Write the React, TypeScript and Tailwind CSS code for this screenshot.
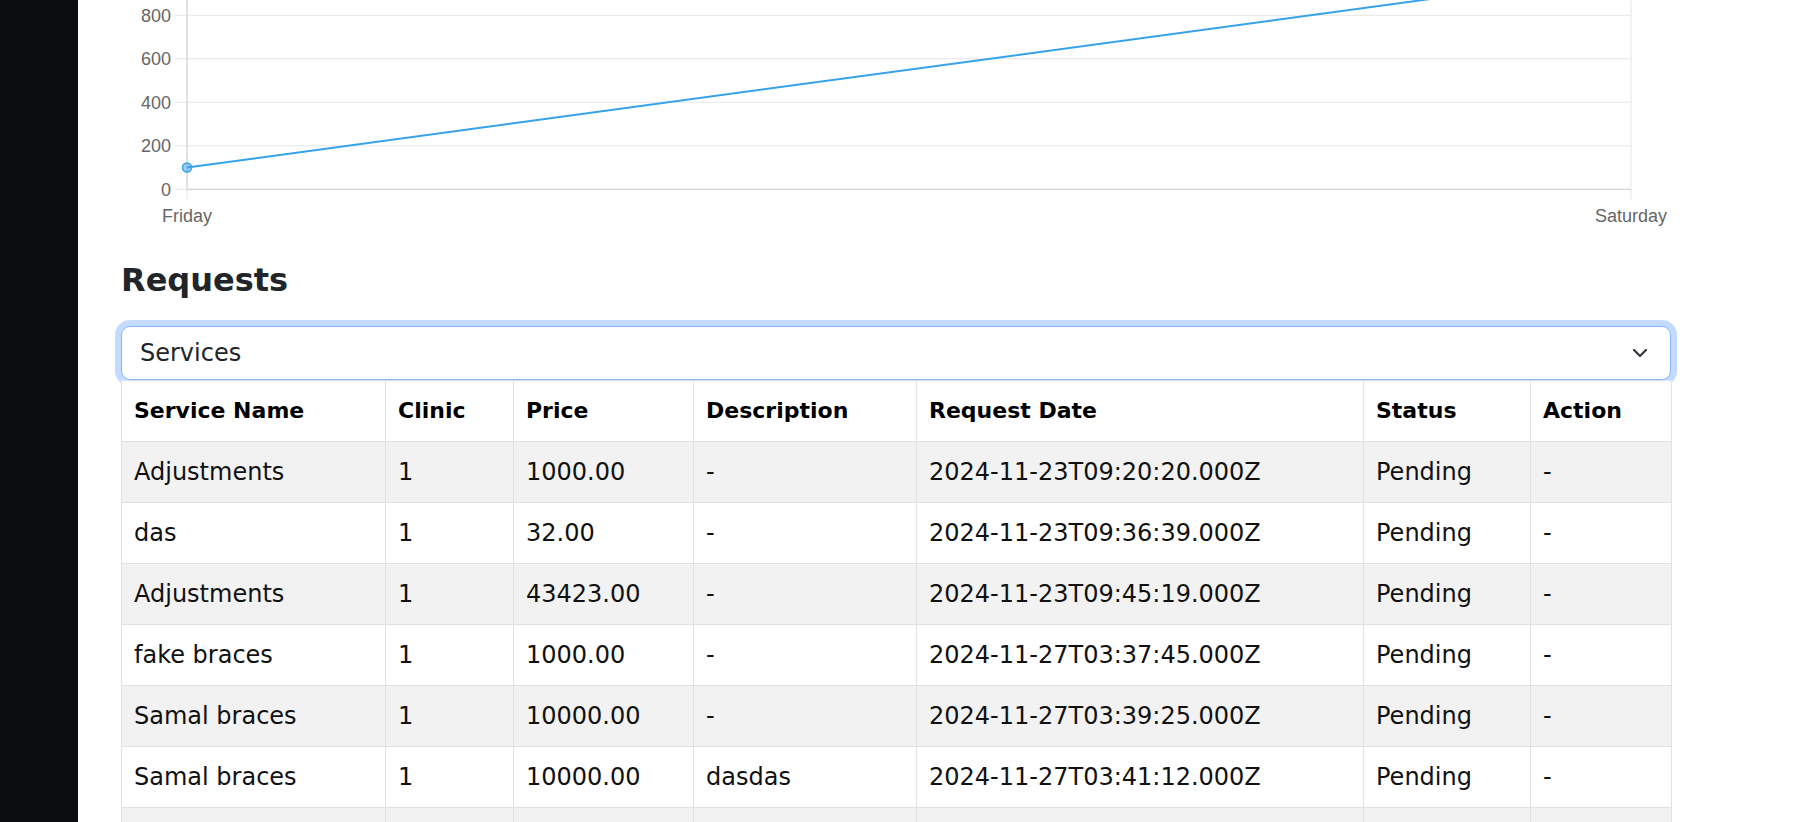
import { ChevronDown } from 'lucide-react';

type Request = {
  service: string;
  clinic: string;
  price: string;
  description: string;
  date: string;
  status: string;
};

const requests: Request[] = [
  { service: 'Adjustments', clinic: '1', price: '1000.00', description: '-', date: '2024-11-23T09:20:20.000Z', status: 'Pending' },
  { service: 'das', clinic: '1', price: '32.00', description: '-', date: '2024-11-23T09:36:39.000Z', status: 'Pending' },
  { service: 'Adjustments', clinic: '1', price: '43423.00', description: '-', date: '2024-11-23T09:45:19.000Z', status: 'Pending' },
  { service: 'fake braces', clinic: '1', price: '1000.00', description: '-', date: '2024-11-27T03:37:45.000Z', status: 'Pending' },
  { service: 'Samal braces', clinic: '1', price: '10000.00', description: '-', date: '2024-11-27T03:39:25.000Z', status: 'Pending' },
  { service: 'Samal braces', clinic: '1', price: '10000.00', description: 'dasdas', date: '2024-11-27T03:41:12.000Z', status: 'Pending' },
];

const columns = ['Service Name', 'Clinic', 'Price', 'Description', 'Request Date', 'Status', 'Action'];

// chart geometry, in svg coords (svg starts at the content column's left edge)
const X0 = 66;
const X1 = 1510;
const yOf = (v: number) => 189.3 - v * 0.2175;

function SalesChart() {
  const ticks = [0, 200, 400, 600, 800, 1000];
  return (
    <svg width="1550" height="240" className="block" style={{ fontFamily: '"Liberation Sans", Arial, sans-serif' }}>
      {ticks.map((t) => (
        <line key={t} x1={54} x2={X1} y1={yOf(t)} y2={yOf(t)} stroke="#e6e6e6" strokeWidth="1" />
      ))}
      <line x1={X0} x2={X0} y1={-40} y2={200} stroke="#e6e6e6" strokeWidth="1" />
      <line x1={X1} x2={X1} y1={-40} y2={200} stroke="#e6e6e6" strokeWidth="1" />
      {/* axis borders */}
      <line x1={X0} x2={X0} y1={-40} y2={yOf(0)} stroke="#d0d0d0" strokeWidth="1" />
      <line x1={X0} x2={X1} y1={yOf(0)} y2={yOf(0)} stroke="#d0d0d0" strokeWidth="1" />
      {ticks.slice(0, 5).map((t) => (
        <text key={t} x={50} y={yOf(t) + 6.4} textAnchor="end" fontSize="18" fill="#666">
          {t}
        </text>
      ))}
      <text x={X0} y={221.7} textAnchor="middle" fontSize="18" fill="#666">Friday</text>
      <text x={X1} y={221.7} textAnchor="middle" fontSize="18" fill="#666">Saturday</text>
      <line x1={X0} y1={yOf(100)} x2={X1} y2={yOf(1000)} stroke="#36a2eb" strokeWidth="2" />
      <circle cx={X0} cy={yOf(100)} r="4.5" fill="rgba(54,162,235,0.5)" stroke="#36a2eb" strokeWidth="1.5" />
    </svg>
  );
}

const cell = 'border border-[#dee2e6] px-[12px] py-[12px] leading-[36px]';

export default function App() {
  return (
    <div className="flex h-screen overflow-hidden bg-white" style={{ fontFamily: '"DejaVu Sans", sans-serif' }}>
      <aside className="w-[78px] shrink-0 bg-[#0b0c0e]" />
      <main className="flex-1 pl-[43px]">
        <div className="w-[1550px]">
          <SalesChart />

          <h4 className="mt-[21px] text-[32px] font-bold leading-[1.2] text-[#212529]">Requests</h4>

          <div className="mt-[27px] flex h-[54px] items-center justify-between rounded-[9px] border border-[#86b7fe] bg-white pl-[18px] pr-[18px] text-[24px] text-[#212529] shadow-[0_0_0_6px_rgba(13,110,253,0.25)]">
            <span>Services</span>
            <ChevronDown size={24} strokeWidth={2.25} className="text-[#343a40]" />
          </div>

          <table className="relative w-[1550px] table-fixed border-collapse bg-white text-[24px] text-[#111]">
            <colgroup>
              <col className="w-[264px]" />
              <col className="w-[128px]" />
              <col className="w-[180px]" />
              <col className="w-[223px]" />
              <col className="w-[447px]" />
              <col className="w-[167px]" />
              <col className="w-[141px]" />
            </colgroup>
            <thead>
              <tr>
                {columns.map((c) => (
                  <th key={c} className={`${cell} text-left text-[22px] font-bold text-black`}>
                    {c}
                  </th>
                ))}
              </tr>
            </thead>
            <tbody>
              {requests.map((r, i) => (
                <tr key={i} className={i % 2 === 0 ? 'bg-[#f2f2f2]' : 'bg-white'}>
                  <td className={cell}>{r.service}</td>
                  <td className={cell}>{r.clinic}</td>
                  <td className={cell}>{r.price}</td>
                  <td className={cell}>{r.description}</td>
                  <td className={cell}>{r.date}</td>
                  <td className={cell}>{r.status}</td>
                  <td className={cell}>-</td>
                </tr>
              ))}
              {/* next row, only its top edge is on screen */}
              <tr className="bg-[#f2f2f2]">
                {columns.map((c) => (
                  <td key={c} className={`${cell} h-[61px]`} />
                ))}
              </tr>
            </tbody>
          </table>
        </div>
      </main>
    </div>
  );
}
